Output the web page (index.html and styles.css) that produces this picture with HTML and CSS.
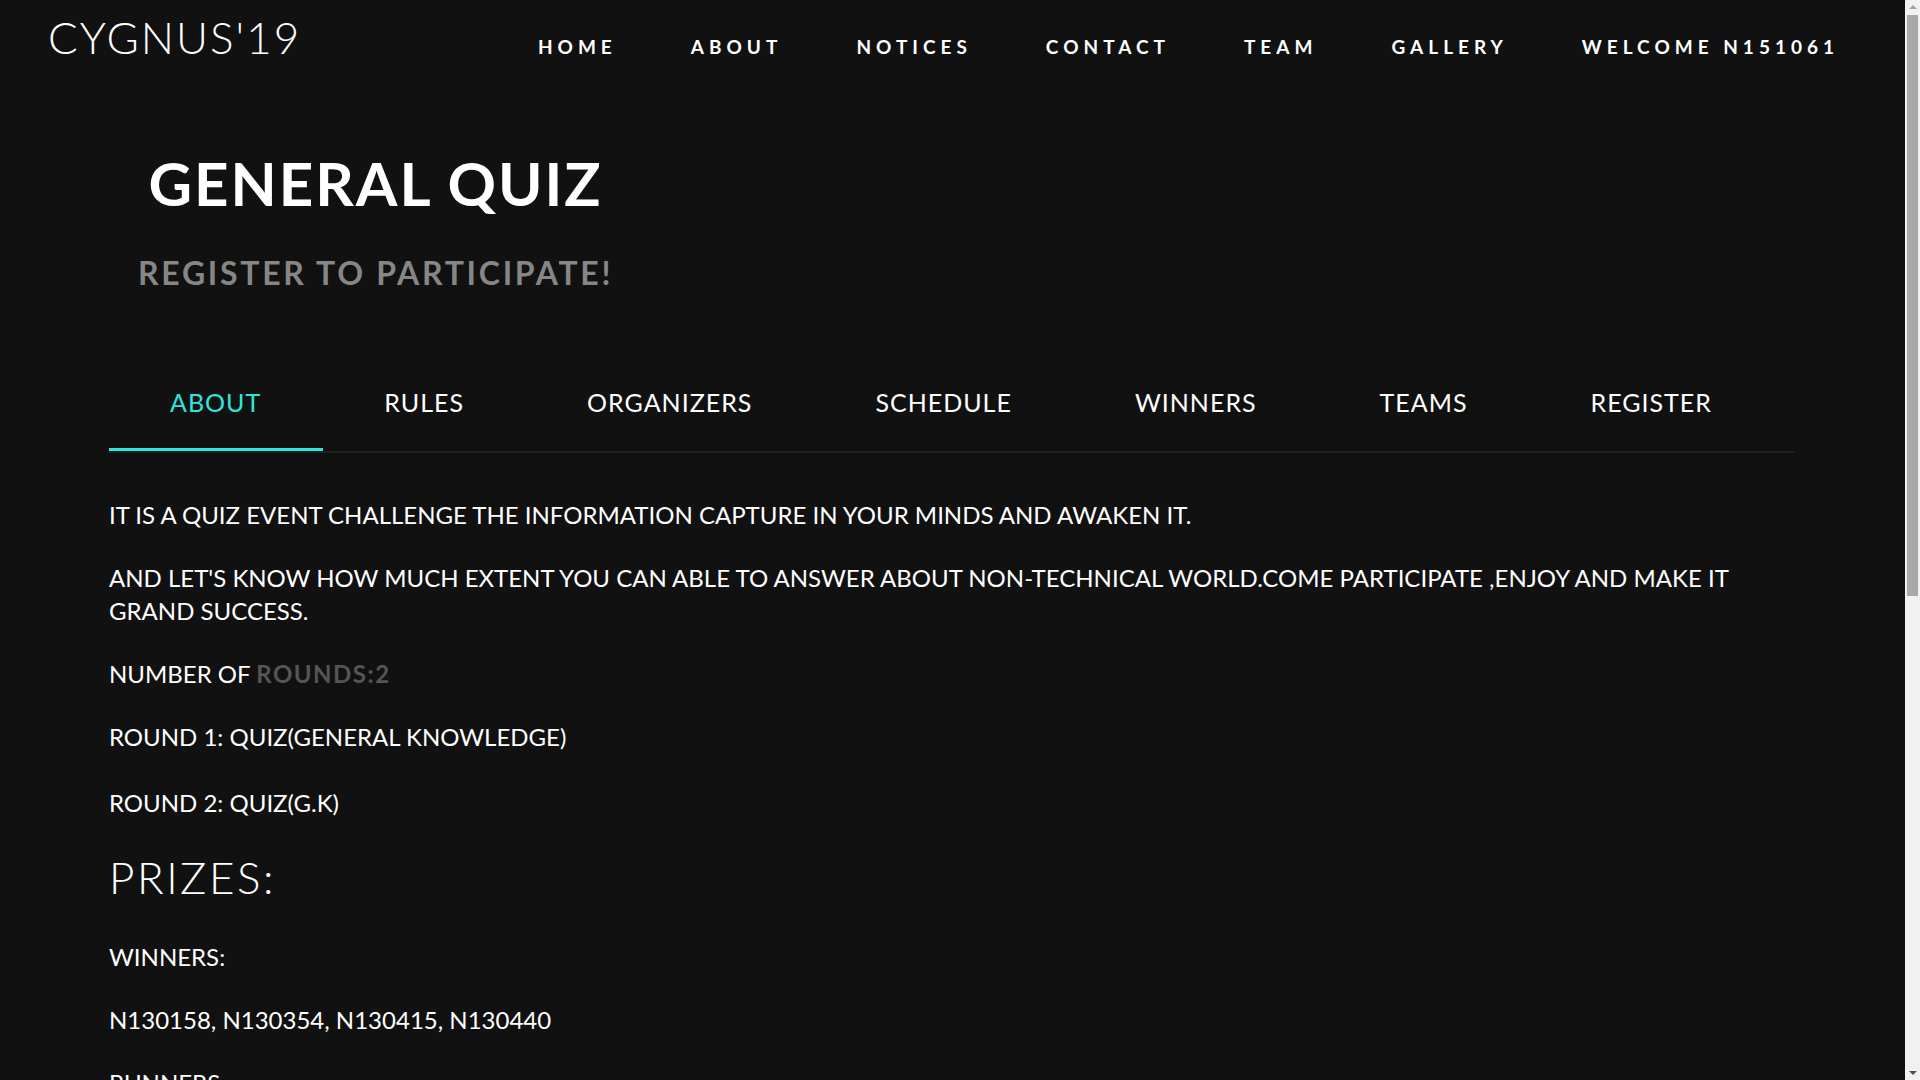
FILE: index.html
```html
<!DOCTYPE html>
<html lang="en">
<head>
<meta charset="utf-8">
<title>Cygnus'19 - General Quiz</title>
<link rel="stylesheet" href="styles.css">
</head>
<body>
<header class="topbar">
  <div class="logo">CYGNUS'19</div>
  <nav class="mainnav">
    <a href="#">HOME</a>
    <a href="#">ABOUT</a>
    <a href="#">NOTICES</a>
    <a href="#">CONTACT</a>
    <a href="#">TEAM</a>
    <a href="#">GALLERY</a>
    <a href="#">WELCOME N151061</a>
  </nav>
</header>

<section class="hero">
  <div class="hero-inner">
    <h1 class="event-title">GENERAL QUIZ</h1>
    <h2 class="event-sub">REGISTER TO PARTICIPATE!</h2>
  </div>
</section>

<section class="event">
  <ul class="tabs">
    <li class="tab active">ABOUT</li>
    <li class="tab">RULES</li>
    <li class="tab">ORGANIZERS</li>
    <li class="tab">SCHEDULE</li>
    <li class="tab">WINNERS</li>
    <li class="tab">TEAMS</li>
    <li class="tab">REGISTER</li>
  </ul>

  <div class="tab-body">
    <p>IT IS A QUIZ EVENT CHALLENGE THE INFORMATION CAPTURE IN YOUR MINDS AND AWAKEN IT.</p>
    <p>AND LET'S KNOW HOW MUCH EXTENT YOU CAN ABLE TO ANSWER ABOUT NON-TECHNICAL WORLD.COME PARTICIPATE ,ENJOY AND MAKE IT GRAND SUCCESS.</p>
    <p>NUMBER OF <span class="muted">ROUNDS:2</span></p>
    <p>ROUND 1: QUIZ(GENERAL KNOWLEDGE)</p>
    <p class="round2">ROUND 2: QUIZ(G.K)</p>
    <h3 class="prizes">PRIZES:</h3>
    <p>WINNERS:</p>
    <p>N130158, N130354, N130415, N130440</p>
    <p>RUNNERS:</p>
    <p>N130215, N130398, N130502, N130611</p>
  </div>
</section>

<div class="scrollbar" aria-hidden="true">
  <span class="sb-arrow sb-up"></span>
  <span class="sb-thumb"></span>
  <span class="sb-arrow sb-down"></span>
</div>
</body>
</html>
```
FILE: styles.css
```css
html {
  background: #111111;
}

body {
  margin: 0 15px 0 0;
  padding: 0;
  background: #111111;
  color: #ffffff;
  font-family: Lato, "Open Sans", sans-serif;
}

.topbar {
  display: flex;
  align-items: baseline;
  padding: 15px 66px 0 48px;
  height: 70px;
  box-sizing: border-box;
}

.logo {
  font-size: 44px;
  font-weight: 300;
  letter-spacing: 2px;
  line-height: 44px;
}

.mainnav {
  margin-left: auto;
  display: flex;
  gap: 74px;
}

.mainnav a {
  color: #ffffff;
  text-decoration: none;
  font-size: 19px;
  font-weight: 700;
  letter-spacing: 5px;
}

.hero {
  padding: 73px 0 0 138px;
}

.hero-inner {
  display: inline-block;
  text-align: center;
}

.event-title {
  margin: 0;
  font-size: 60px;
  font-weight: 700;
  letter-spacing: 2px;
  line-height: 80px;
}

.event-sub {
  margin: 30px 0 0;
  font-size: 32px;
  font-weight: 700;
  color: #868686;
  letter-spacing: 2.7px;
  line-height: 40px;
}

.event {
  padding: 0 110px 740px 109px;
}

.tabs {
  list-style: none;
  display: flex;
  margin: 60px 0 0;
  padding: 0;
  border-bottom: 2px solid #1f1f1f;
}

.tab {
  padding: 34px 62px 31px 61px;
  font-size: 25px;
  letter-spacing: 1px;
  line-height: 30px;
  color: #ffffff;
  border-bottom: 3px solid transparent;
}

.tab.active {
  color: #2ee6dc;
  border-bottom-color: #2ee6dc;
}

.tab-body {
  padding-top: 45px;
}

.tab-body p {
  margin: 0 0 30px;
  font-size: 24px;
  line-height: 33px;
}

.tab-body p.round2 {
  margin-top: 33px;
}

.muted {
  color: #555555;
  font-weight: 700;
  letter-spacing: 1.5px;
}

.prizes {
  margin: 0 0 35px;
  font-size: 44px;
  font-weight: 300;
  letter-spacing: 2.5px;
  line-height: 56px;
}

/* browser scrollbar as seen in the screenshot */
.scrollbar {
  position: fixed;
  top: 0;
  right: 0;
  width: 15px;
  height: 100vh;
  background: #f1f1f1;
  display: flex;
  flex-direction: column;
  align-items: center;
}

.sb-arrow {
  width: 0;
  height: 0;
  border-left: 4px solid transparent;
  border-right: 4px solid transparent;
}

.sb-up {
  margin-top: 5px;
  border-bottom: 4px solid #a3a3a3;
}

.sb-down {
  margin-top: auto;
  margin-bottom: 5px;
  border-top: 4px solid #505050;
}

.sb-thumb {
  margin-top: 6px;
  width: 11px;
  height: 581px;
  background: #a8a8a8;
}
```
